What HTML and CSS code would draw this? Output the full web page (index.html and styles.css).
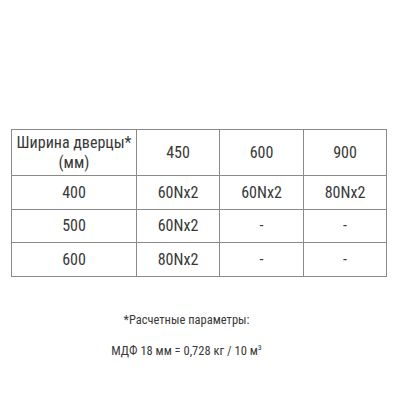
FILE: index.html
```html
<!DOCTYPE html>
<html lang="ru">
<head>
<meta charset="utf-8">
<link rel="stylesheet" href="styles.css">
</head>
<body>
<div class="page">
  <table class="spec">
    <colgroup>
      <col class="c1"><col class="c2"><col class="c3"><col class="c4">
    </colgroup>
    <tr class="head">
      <td>Ширина дверцы*<br>(мм)</td>
      <td>450</td>
      <td>600</td>
      <td>900</td>
    </tr>
    <tr class="r1">
      <td>400</td><td>60Nx2</td><td>60Nx2</td><td>80Nx2</td>
    </tr>
    <tr class="r2">
      <td>500</td><td>60Nx2</td><td>-</td><td>-</td>
    </tr>
    <tr class="r3">
      <td>600</td><td>80Nx2</td><td>-</td><td>-</td>
    </tr>
  </table>
  <p class="note">*Расчетные параметры:</p>
  <p class="note formula">МДФ 18 мм = 0,728 кг / 10 м<sup>3</sup></p>
</div>
</body>
</html>
```
FILE: styles.css
```css
html, body {
  margin: 0;
  background: #fff;
}
.page {
  padding: 129px 14px 0 11px;
  font-family: Roboto, "Liberation Sans", sans-serif;
  font-stretch: 75%;
  color: #383838;
}
.spec {
  border-collapse: collapse;
  width: 375px;
  table-layout: fixed;
  font-size: 16px;
}
.c1 { width: 125px; }
.c2 { width: 83px; }
.c3 { width: 84px; }
.c4 { width: 83px; }
.spec td {
  border: 1px solid #8a8a8a;
  text-align: center;
  vertical-align: middle;
  padding: 0;
  line-height: 20px;
}
.spec tr.head td { height: 45px; }
.spec tr.r1 td { height: 33px; }
.spec tr.r2 td { height: 32px; }
.spec tr.r3 td { height: 33px; }
.note {
  margin: 0;
  text-align: center;
  font-size: 12.5px;
  line-height: 16px;
  padding-right: 24px;
  color: #3a3a3a;
}
.note:first-of-type {
  margin-top: 35px;
}
.formula {
  margin-top: 15px;
}
.formula sup {
  font-size: 8px;
  line-height: 0;
  vertical-align: 5px;
}
```
